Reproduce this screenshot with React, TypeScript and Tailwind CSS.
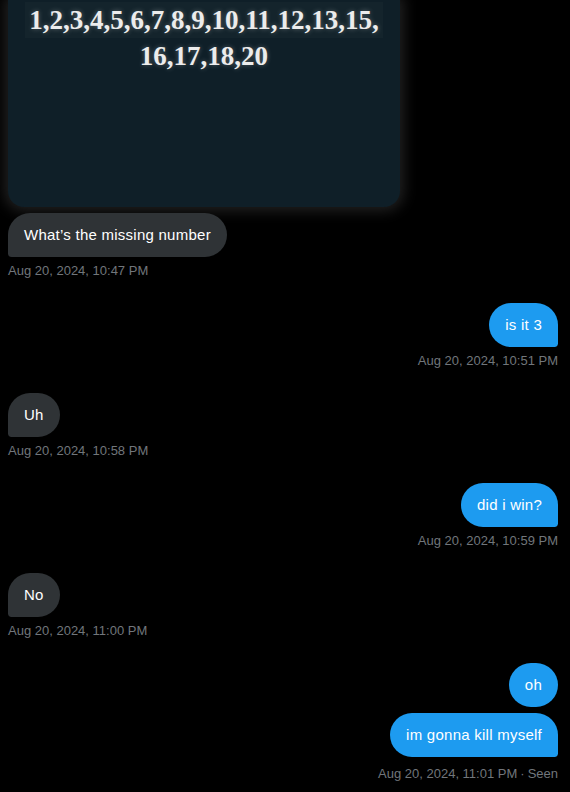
import React from "react";

function Bubble({ text, mine, tail }: { text: string; mine: boolean; tail: boolean }) {
  const base =
    "h-[44px] px-4 flex items-center text-[15px] leading-5 tracking-[0.25px] text-white rounded-[24px]";
  if (mine) {
    return (
      <div className={`${base} bg-[#1d9bf0] ${tail ? "rounded-br-[4px]" : ""}`}>{text}</div>
    );
  }
  return <div className={`${base} bg-[#2f3336] ${tail ? "rounded-bl-[4px]" : ""}`}>{text}</div>;
}

function Stamp({ children, mine, extra }: { children: React.ReactNode; mine: boolean; extra?: boolean }) {
  return (
    <div
      className={`${extra ? "mt-[9px]" : "mt-[6px]"} text-[13px] leading-4 text-[#71767b] ${
        mine ? "self-end" : "self-start"
      }`}
    >
      {children}
    </div>
  );
}

export default function App() {
  return (
    <div
      className="w-[570px] h-[792px] bg-black overflow-hidden pl-2 pr-3 flex flex-col"
      style={{ fontFamily: '"Liberation Sans", Arial, sans-serif' }}
    >
      {/* Image */}
      <div className="w-[392px] h-[207px] shrink-0 rounded-b-[16px] bg-[#0f1f28] shadow-[0_0_14px_4px_rgba(120,120,120,0.28)] flex flex-col items-center pt-[2px]">
        <div
          className="text-[27px] leading-[36px] font-bold text-[#ececec] text-center [text-shadow:0_0_5px_rgba(255,255,255,0.3)]"
          style={{ fontFamily: '"Liberation Serif", "Times New Roman", serif' }}
        >
          <div className="bg-[#1a2930]/50 px-1">1,2,3,4,5,6,7,8,9,10,11,12,13,15,</div>
          <div>16,17,18,20</div>
        </div>
      </div>

      <div className="mt-[6px] flex flex-col">
        <div className="flex flex-col items-start pb-[24px]">
          <Bubble text="What’s the missing number" mine={false} tail />
          <Stamp mine={false}>Aug 20, 2024, 10:47 PM</Stamp>
        </div>
        <div className="flex flex-col items-end pb-[24px]">
          <Bubble text="is it 3" mine tail />
          <Stamp mine>Aug 20, 2024, 10:51 PM</Stamp>
        </div>
        <div className="flex flex-col items-start pb-[24px]">
          <Bubble text="Uh" mine={false} tail />
          <Stamp mine={false}>Aug 20, 2024, 10:58 PM</Stamp>
        </div>
        <div className="flex flex-col items-end pb-[24px]">
          <Bubble text="did i win?" mine tail />
          <Stamp mine>Aug 20, 2024, 10:59 PM</Stamp>
        </div>
        <div className="flex flex-col items-start pb-[24px]">
          <Bubble text="No" mine={false} tail />
          <Stamp mine={false}>Aug 20, 2024, 11:00 PM</Stamp>
        </div>
        <div className="flex flex-col items-end gap-[6px]">
          <Bubble text="oh" mine tail={false} />
          <Bubble text="im gonna kill myself" mine tail />
        </div>
        <div className="flex flex-col items-end">
          <Stamp mine extra>
            Aug 20, 2024, 11:01 PM<span className="mx-[3px]">·</span>Seen
          </Stamp>
        </div>
      </div>
    </div>
  );
}
